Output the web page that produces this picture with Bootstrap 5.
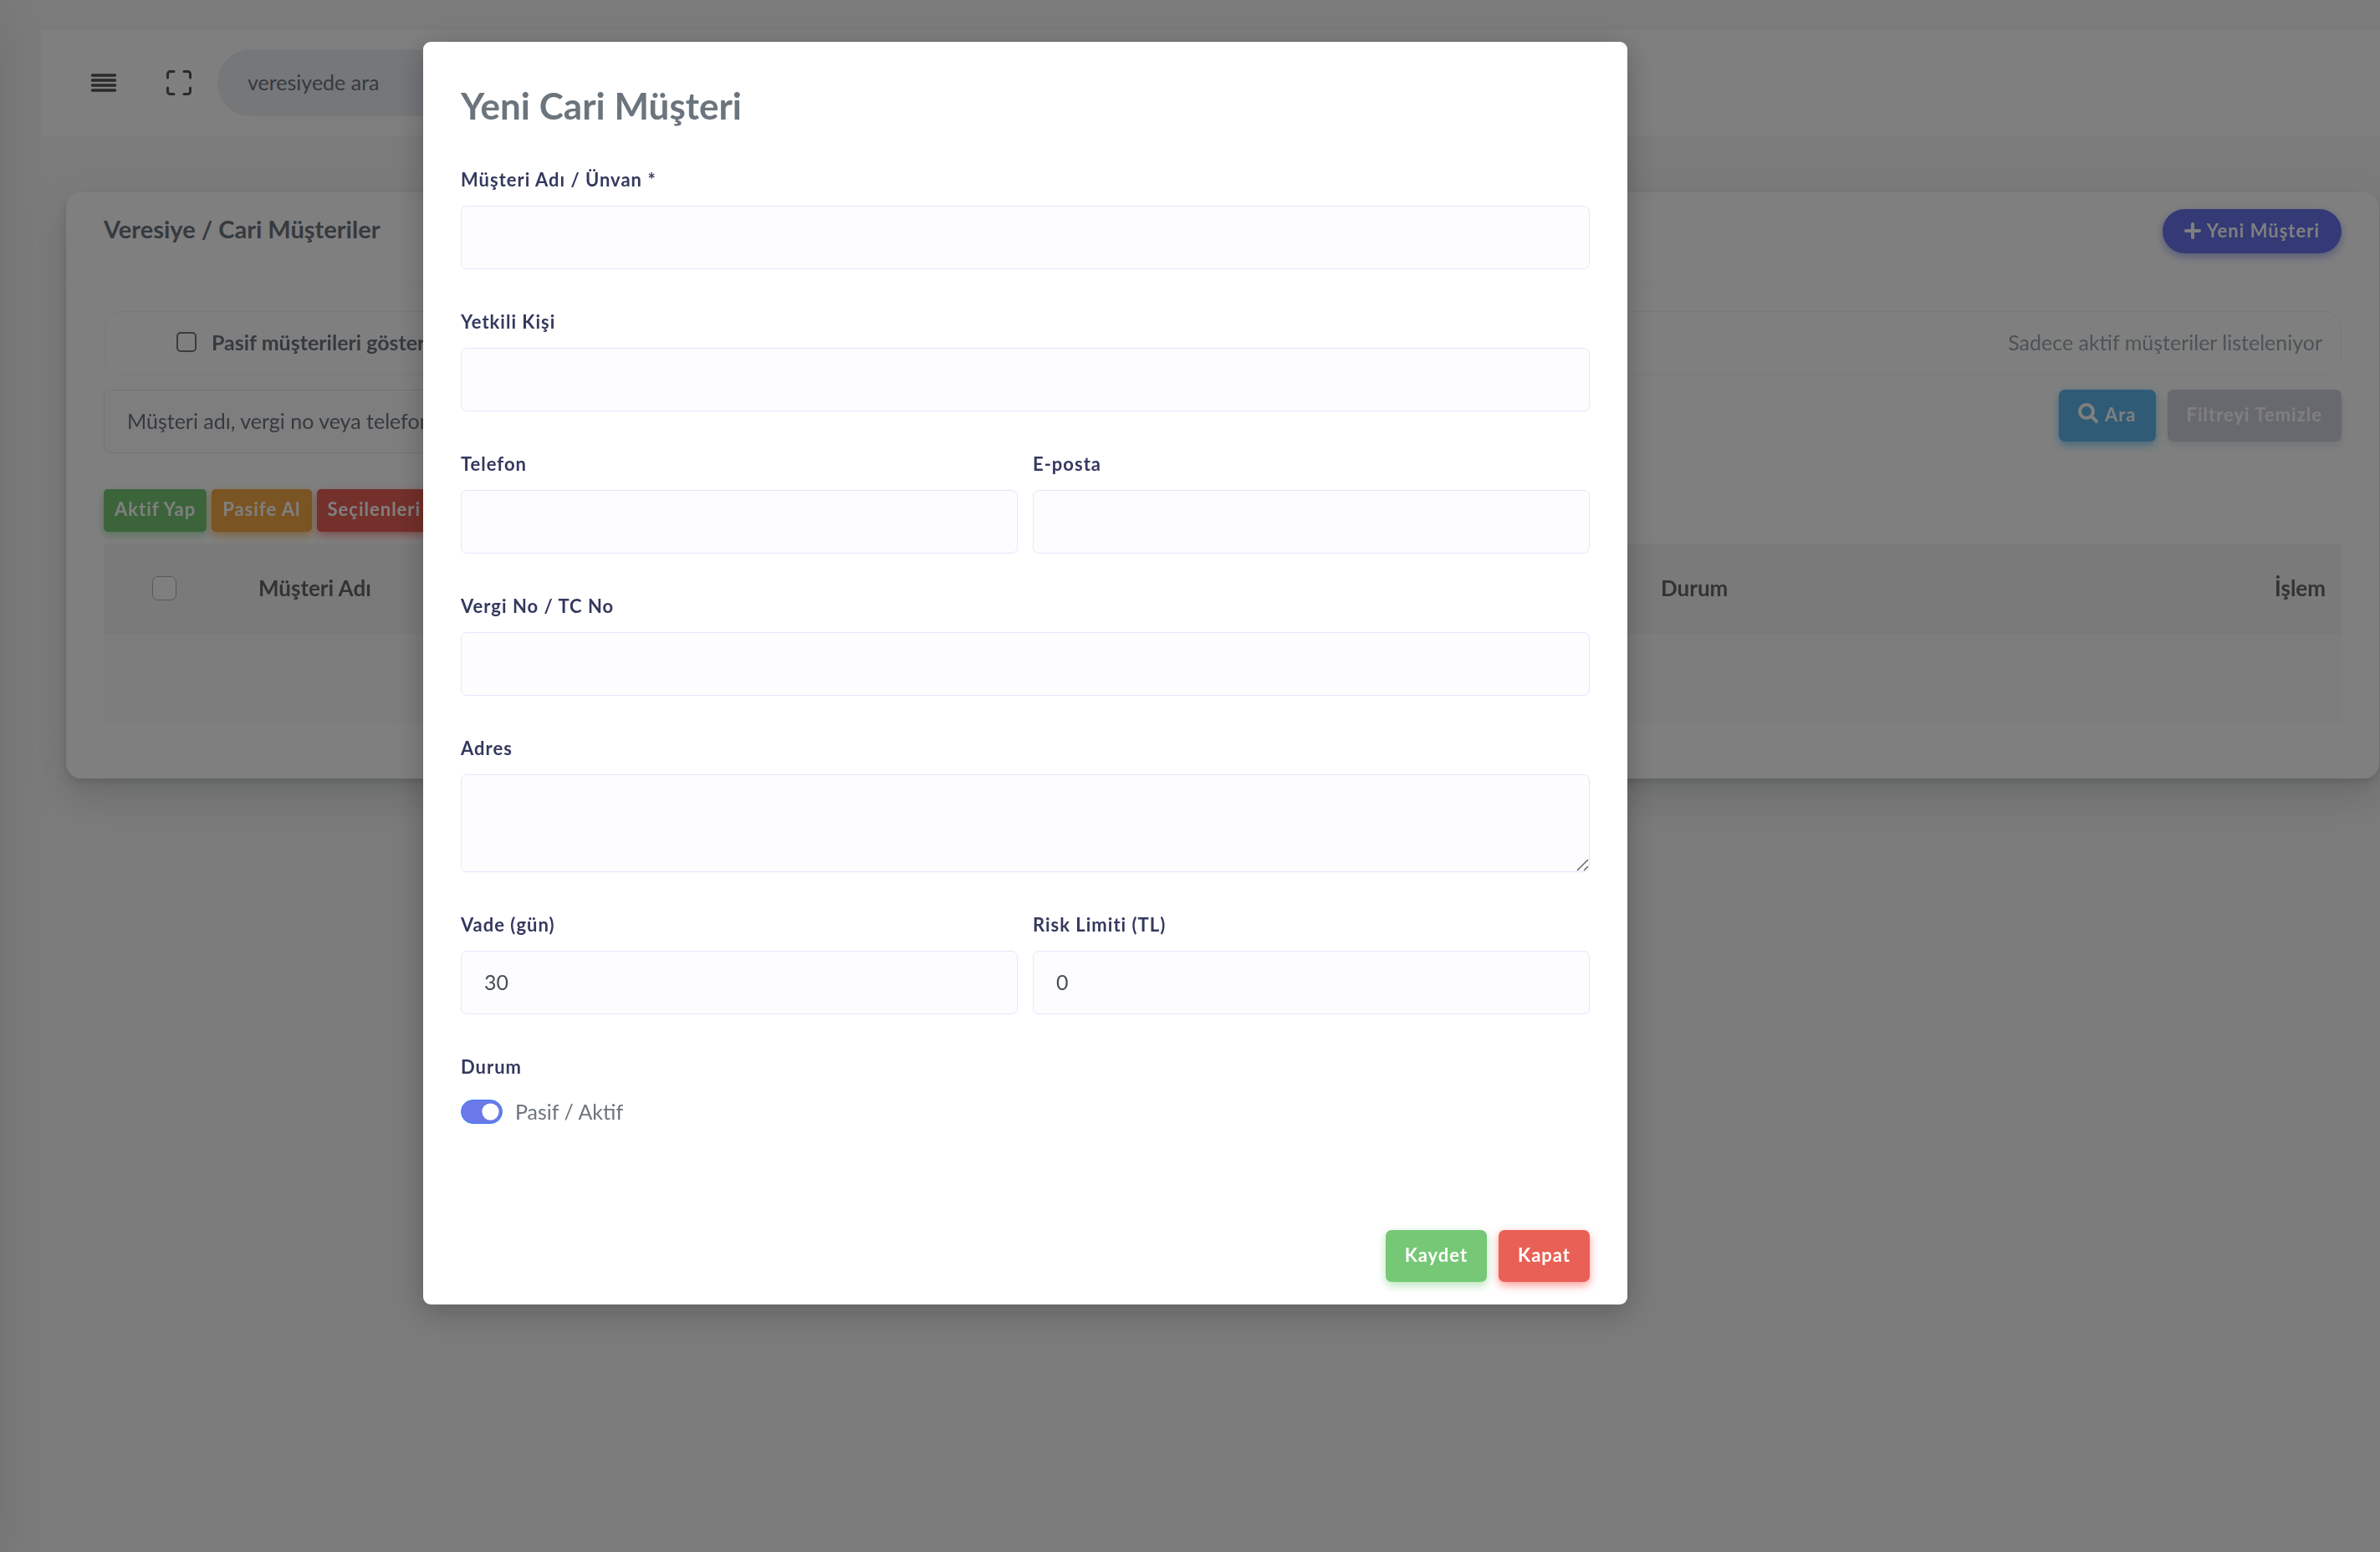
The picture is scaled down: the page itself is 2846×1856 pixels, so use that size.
<!DOCTYPE html>
<html lang="tr">
<head>
<meta charset="utf-8">
<meta name="viewport" content="width=device-width, initial-scale=1">
<title>Veresiye / Cari Müşteriler</title>
<link rel="stylesheet" href="https://cdn.jsdelivr.net/npm/bootstrap@5.3.0/dist/css/bootstrap.min.css">
<style>
:root {
  --ink: #6c757d;
  --label: #34395e;
  --field: #fdfdff;
  --line: #e4e6fc;
}
body {
  background: #f7f7f7;
  color: var(--ink);
  font-family: Lato, "Liberation Sans", sans-serif;
  font-size: 25px;
  line-height: 45px;
  min-height: 100vh;
}
/* collapsed side menu: only its shadow reaches the page */
.side-menu { position: fixed; top: 0; bottom: 0; left: -100px; width: 100px; box-shadow: 0 14px 63px rgba(90,97,105,.15); }
.page-shell { padding: 36px 0 0 50px; }
.top-bar { background: #fff; height: 126px; padding-left: 56px; }
.tool-btn { border: 0; background: none; padding: 0; margin-right: 54px; line-height: 1; color: #555; }
.tool-btn + .tool-btn { margin-right: 28px; }
.tool-btn svg { width: 36px; height: 36px; display: block; }
.top-search { width: 450px; height: 80px; border: 0; border-radius: 40px; background: #ebeef3; padding: 0 36px 2px; font-size: 25px; color: var(--ink); }
.form-control::placeholder { color: var(--ink); opacity: 1; }
.panel-card { margin: 68px 1px 0 29px; border: 0; border-radius: 18px;
  box-shadow: 0 14px 63px rgba(90,97,105,.1), 0 27px 40px rgba(90,97,105,.1), 0 7px 15px rgba(90,97,105,.12), 0 4px 5px rgba(90,97,105,.1); }
.panel-card > .card-header { background: #fff; border-bottom: 1px solid #f9f9f9; border-radius: 18px 18px 0 0; padding: 20px 45px 32px; }
.panel-card > .card-body { padding: 36px 45px 65px; }
.panel-title { font-size: 29px; line-height: 48px; font-weight: 700; margin: 0; color: var(--ink); }
.filter-box { height: 76px; border: 1px solid #f2f2f2; border-radius: 22px; padding: 0 22px 2px 86px; margin-bottom: 18px; }
.filter-box .form-check-input { width: 24px; height: 24px; margin: 0 18px 0 0; border: 2px solid #767676; border-radius: 5px; background: #fff; }
.hint { color: #98a6ad; }
.field { height: 76px; background: var(--field); border: 1px solid var(--line); border-radius: 7px; padding: 0 27px 2px; font-size: 25px; color: #495057; }
.filter-row { gap: 14px; margin-bottom: 43px; }
.bulk-row { gap: 6px; margin-bottom: 14px; }
.act { border: 0; color: #fff; font-size: 22px; line-height: 30px; font-weight: 700; letter-spacing: 1px; border-radius: 7px; padding: 15px 23px 17px; }
.act:hover { color: #fff; }
.act-sm { padding: 9px 13px 12px; border-radius: 5px; }
.act-round { border-radius: 27px; padding: 11px 26px 12px; }
.act svg { display: inline-block; vertical-align: -2px; margin-right: 7px; }
.c-green { background: #76c876; box-shadow: 0 4px 11px #b4e4b8; }
.c-amber { background: #f4a846; box-shadow: 0 4px 11px #ffc473; }
.c-red { background: #e96056; box-shadow: 0 4px 11px #fd9b96; }
.c-indigo { background: #6875ea; box-shadow: 0 4px 11px #acb5f6; }
.c-sky { background: #60b6ec; box-shadow: 0 4px 11px #82d3f8; }
.c-grey { background: #cfd3dc; box-shadow: 0 4px 11px #e1e5e8; }
.list-grid { table-layout: fixed; margin: 0; }
.list-grid th { height: 108px; padding: 0 19px 2px; background: #f4f4f4; color: #666; vertical-align: middle; border: 0; font-size: 26px; font-weight: 700; }
.list-grid td { height: 108px; background: #fbfbfb; border: 0; }
.list-grid .form-check-input { display: block; width: 29px; height: 29px; margin: 0 0 0 39px; border: 1px solid #adb3ba; border-radius: 7px; }
.w-check { width: 166px; } .w-state { width: 460px; } .w-act { width: 373px; }

.customer-dialog { max-width: 1440px; margin: 50px auto 50px 506px; }
.customer-dialog .modal-content { border: 0; border-radius: 9px; color: var(--ink); box-shadow: 0 8px 36px rgba(0,0,0,.25); }
.customer-dialog .modal-header { border: 0; padding: 46px 45px 0; }
.customer-dialog .modal-title { font-size: 44px; line-height: 60px; font-weight: 700; }
.customer-dialog .modal-body { padding: 42px 45px 45px; }
.customer-dialog .modal-footer { border: 0; padding: 28px 45px 27px; gap: 14px; }
.customer-dialog .modal-footer > * { margin: 0; }
.field-group { margin-bottom: 46px; }
.field-group .form-label { display: block; font-size: 22px; line-height: 34px; margin-bottom: 14px; color: var(--label); font-weight: 700; letter-spacing: 1px; }
.pair { --bs-gutter-x: 18px; }
textarea.field { height: 117px; min-height: 117px; padding: 18px 27px; resize: vertical; }
textarea.field::-webkit-resizer { background: url("data:image/svg+xml,%3Csvg xmlns='http://www.w3.org/2000/svg' viewBox='0 0 15 15'%3E%3Cpath d='M1 14L14 1M9 14l5-5' stroke='%23666' stroke-width='1.5'/%3E%3C/svg%3E") no-repeat right bottom / 15px 15px; }
.state-switch { padding: 0; min-height: 45px; margin: 0; }
.state-switch .form-check-input { width: 50px; height: 29px; margin: 0 15px 0 0; }
.state-switch .form-check-input:checked { background-color: #6b78e8; border-color: #3b82f6; }
</style>
<script src="https://cdn.jsdelivr.net/npm/bootstrap@5.3.0/dist/js/bootstrap.bundle.min.js"></script>
</head>
<body class="modal-open">
<aside class="side-menu"></aside>
<div class="page-shell">
  <nav class="top-bar d-flex align-items-center">
    <button class="tool-btn" type="button" aria-label="Menü"><svg viewBox="0 0 24 24" fill="none" stroke="currentColor" stroke-width="2.4" stroke-linecap="round"><path d="M3 6h18M3 10h18M3 14h18M3 18h18"/></svg></button>
    <button class="tool-btn" type="button" aria-label="Tam ekran"><svg viewBox="0 0 24 24" fill="none" stroke="currentColor" stroke-width="2" stroke-linecap="round" stroke-linejoin="round"><path d="M8 3H5a2 2 0 0 0-2 2v3m18 0V5a2 2 0 0 0-2-2h-3m0 18h3a2 2 0 0 0 2-2v-3M3 16v3a2 2 0 0 0 2 2h3"/></svg></button>
    <input class="form-control top-search" type="search" placeholder="veresiyede ara" aria-label="veresiyede ara">
  </nav>

  <main class="card panel-card">
    <div class="card-header d-flex justify-content-between align-items-start">
      <h4 class="panel-title">Veresiye / Cari Müşteriler</h4>
      <button class="btn act act-round c-indigo" type="button"><svg width="20" height="20" viewBox="0 0 20 20" fill="none" stroke="currentColor" stroke-width="4" stroke-linecap="round"><path d="M10 2v16M2 10h16"/></svg>Yeni Müşteri</button>
    </div>
    <div class="card-body">
      <div class="filter-box d-flex align-items-center">
        <input class="form-check-input" type="checkbox" id="showPassive">
        <label class="fw-bold" for="showPassive">Pasif müşterileri göster</label>
        <span class="hint ms-auto">Sadece aktif müşteriler listeleniyor</span>
      </div>
      <div class="filter-row d-flex align-items-start">
        <input class="form-control field w-50" type="text" placeholder="Müşteri adı, vergi no veya telefon" aria-label="Müşteri ara">
        <button class="btn act c-sky ms-auto" type="button"><svg width="25" height="24" viewBox="0 0 25 24" fill="none" stroke="currentColor" stroke-width="4" stroke-linecap="round"><circle cx="10" cy="10" r="8"/><path d="M16 16l6 6"/></svg>Ara</button>
        <button class="btn act c-grey" type="button">Filtreyi Temizle</button>
      </div>
      <div class="bulk-row d-flex">
        <button class="btn act act-sm c-green" type="button">Aktif Yap</button>
        <button class="btn act act-sm c-amber" type="button">Pasife Al</button>
        <button class="btn act act-sm c-red" type="button">Seçilenleri Sil</button>
      </div>
      <table class="table list-grid">
        <thead>
          <tr>
            <th class="w-check"><input class="form-check-input" type="checkbox" aria-label="Tümünü seç"></th>
            <th>Müşteri Adı</th>
            <th class="w-state">Durum</th>
            <th class="w-act text-end">İşlem</th>
          </tr>
        </thead>
        <tbody><tr><td colspan="4"></td></tr></tbody>
      </table>
    </div>
  </main>
</div>

<div class="modal-backdrop show"></div>
<div class="modal show d-block" tabindex="-1" role="dialog" aria-labelledby="dialogTitle" aria-modal="true">
  <div class="modal-dialog customer-dialog">
    <form class="modal-content">
      <div class="modal-header"><h2 class="modal-title" id="dialogTitle">Yeni Cari Müşteri</h2></div>
      <div class="modal-body">
        <div class="field-group">
          <label class="form-label" for="fName">Müşteri Adı / Ünvan *</label>
          <input class="form-control field" id="fName" type="text">
        </div>
        <div class="field-group">
          <label class="form-label" for="fPerson">Yetkili Kişi</label>
          <input class="form-control field" id="fPerson" type="text">
        </div>
        <div class="row pair">
          <div class="col-6 field-group">
            <label class="form-label" for="fPhone">Telefon</label>
            <input class="form-control field" id="fPhone" type="tel">
          </div>
          <div class="col-6 field-group">
            <label class="form-label" for="fMail">E-posta</label>
            <input class="form-control field" id="fMail" type="email">
          </div>
        </div>
        <div class="field-group">
          <label class="form-label" for="fTax">Vergi No / TC No</label>
          <input class="form-control field" id="fTax" type="text">
        </div>
        <div class="field-group">
          <label class="form-label" for="fAddress">Adres</label>
          <textarea class="form-control field" id="fAddress"></textarea>
        </div>
        <div class="row pair">
          <div class="col-6 field-group">
            <label class="form-label" for="fDue">Vade (gün)</label>
            <input class="form-control field" id="fDue" type="number" value="30">
          </div>
          <div class="col-6 field-group">
            <label class="form-label" for="fRisk">Risk Limiti (TL)</label>
            <input class="form-control field" id="fRisk" type="number" value="0">
          </div>
        </div>
        <div class="field-group">
          <label class="form-label" for="fState">Durum</label>
          <div class="form-check form-switch state-switch d-flex align-items-center">
            <input class="form-check-input" type="checkbox" role="switch" id="fState" checked>
            <label class="form-check-label" for="fState">Pasif / Aktif</label>
          </div>
        </div>
      </div>
      <div class="modal-footer">
        <button class="btn act c-green" type="button">Kaydet</button>
        <button class="btn act c-red" type="button">Kapat</button>
      </div>
    </form>
  </div>
</div>
</body>
</html>
